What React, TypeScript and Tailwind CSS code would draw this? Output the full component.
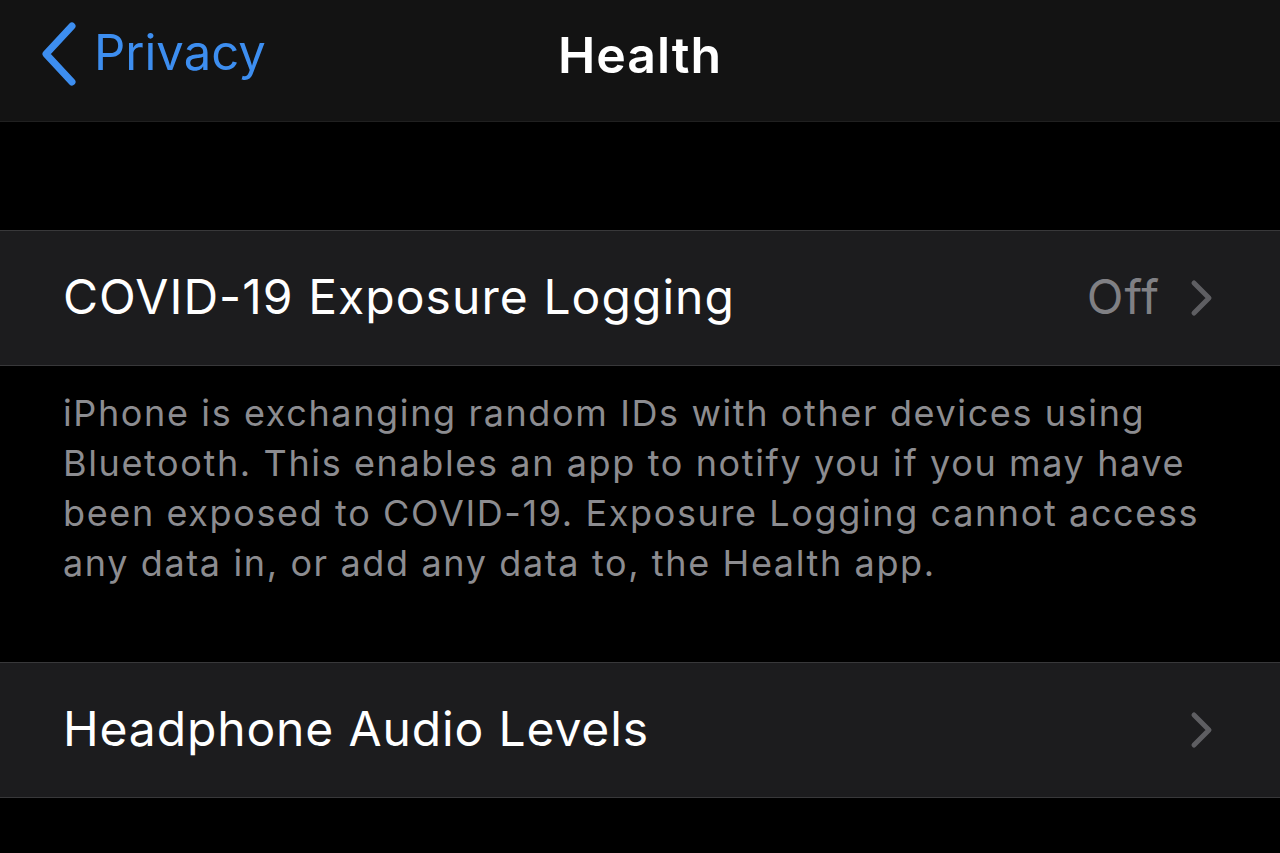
export default function App() {
  return (
    <div
      className="w-[1280px] h-[853px] overflow-hidden bg-black flex flex-col"
      style={{ fontFamily: "Inter, 'Noto Sans', sans-serif" }}
    >
      {/* Nav bar */}
      <div className="relative h-[122px] shrink-0 bg-[#131313] border-b border-[#202020] flex items-start justify-center pt-[30px]">
        <div className="absolute left-[38px] top-[20px] flex items-center gap-[14px] text-[#3d8ef0]">
          <svg width="42" height="68" viewBox="0 0 42 68" fill="none">
            <path d="M34 6 L8 34 L34 62" stroke="currentColor" strokeWidth="7" strokeLinecap="round" strokeLinejoin="round" />
          </svg>
          <span className="text-[49px] leading-none -mt-[4px]">Privacy</span>
        </div>
        <span className="text-[50px] font-semibold text-white leading-none tracking-[0.02em]">Health</span>
      </div>

      <div className="h-[108px] shrink-0" />

      {/* Row 1 */}
      <div className="h-[136px] shrink-0 bg-[#1c1c1e] border-y border-[#38383a] flex items-center pl-[63px] pr-[66px]">
        <span className="flex-1 text-[48px] text-white leading-none tracking-[0.022em] -mt-[2px]">COVID-19 Exposure Logging</span>
        <span className="text-[48px] text-[#808084] leading-none tracking-[0.02em] -mt-[2px]">Off</span>
        <svg className="ml-[30px]" width="24" height="38" viewBox="0 0 24 38" fill="none">
          <path d="M4 4 L19 19 L4 34" stroke="#5e5e62" strokeWidth="5" strokeLinecap="round" strokeLinejoin="round" />
        </svg>
      </div>

      {/* Footer text */}
      <div className="h-[296px] shrink-0 pl-[63px] pr-[40px] pt-[22px]">
        <p className="text-[36px] leading-[50px] text-[#8c8c90] tracking-[0.045em] whitespace-nowrap">
          iPhone is exchanging random IDs with other devices using
          <br />
          Bluetooth. This enables an app to notify you if you may have
          <br />
          been exposed to COVID-19. Exposure Logging cannot access
          <br />
          any data in, or add any data to, the Health app.
        </p>
      </div>

      {/* Row 2 */}
      <div className="h-[136px] shrink-0 bg-[#1c1c1e] border-y border-[#38383a] flex items-center pl-[63px] pr-[66px]">
        <span className="flex-1 text-[48px] text-white leading-none tracking-[0.018em] -mt-[2px]">Headphone Audio Levels</span>
        <svg width="24" height="38" viewBox="0 0 24 38" fill="none">
          <path d="M4 4 L19 19 L4 34" stroke="#5e5e62" strokeWidth="5" strokeLinecap="round" strokeLinejoin="round" />
        </svg>
      </div>
    </div>
  );
}
